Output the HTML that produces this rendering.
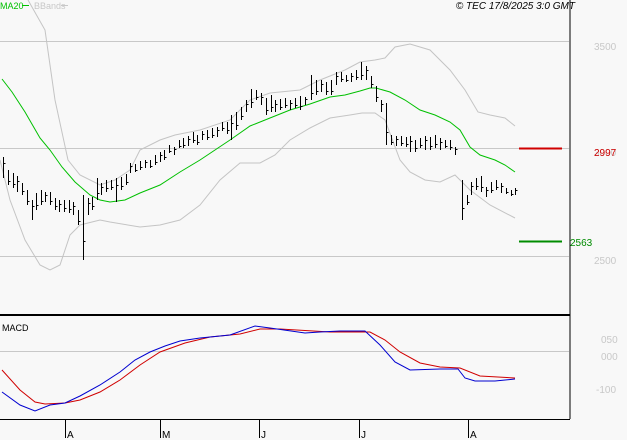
<!DOCTYPE html>
<html><head><meta charset="utf-8"><style>
html,body{margin:0;padding:0;background:#f8f8f8;}
svg{display:block;font-family:"Liberation Sans",sans-serif;}
</style></head><body>
<svg id="c" width="627" height="440" xmlns="http://www.w3.org/2000/svg">
<rect width="627" height="440" fill="#f8f8f8"/>
<g stroke="#c8c8c8" stroke-width="1">
<line x1="0" y1="41.5" x2="569" y2="41.5"/>
<line x1="0" y1="148.5" x2="569" y2="148.5"/>
<line x1="0" y1="256.5" x2="569" y2="256.5"/>
<line x1="0" y1="351.5" x2="569" y2="351.5"/>
</g>
<g fill="none" stroke="#c4c4c4" stroke-width="1">
<polyline points="28,0 45,30 55,100 68,160 80,175 100,185 115,180 130,170 140,150 160,140 175,135 200,130 230,120 250,100 270,93 300,90 320,80 345,70 360,62 375,60 385,58 395,47 410,44 430,50 450,70 465,90 478,112 490,115 505,118 515,126"/>
<polyline points="0,160 10,200 25,240 40,265 50,270 60,265 70,235 80,225 100,220 110,222 140,227 160,225 180,220 200,205 220,180 240,163 260,163 275,155 290,140 310,128 330,118 350,115 362,113 375,113 385,120 400,160 410,172 425,180 440,182 455,175 470,190 490,205 515,218"/>
</g>
<polyline fill="none" stroke="#00c000" stroke-width="1" points="2,79 12,92 25,112 40,138 50,150 62,167 75,182 90,195 100,200 110,202 125,200 140,193 160,185 180,172 200,160 230,140 250,126 270,118 290,110 310,104 330,97 345,95 360,91 370,88 376,88 390,92 405,100 420,110 435,115 450,122 460,130 470,147 480,155 495,160 505,165 515,172"/>
<g id="bars" stroke="#000" stroke-width="1" fill="none"></g>
<line x1="570" y1="0" x2="570" y2="419" stroke="#000" stroke-width="1"/>
<line x1="0" y1="315" x2="570" y2="315" stroke="#000" stroke-width="2"/>
<line x1="0" y1="419.5" x2="570" y2="419.5" stroke="#000" stroke-width="1"/>
<line x1="519" y1="148.5" x2="562" y2="148.5" stroke="#d00000" stroke-width="2"/>
<line x1="519" y1="241.5" x2="562" y2="241.5" stroke="#008c00" stroke-width="2"/>
<g font-size="10" fill="#c8c8c8">
<text x="594" y="50">3500</text>
<text x="594" y="156">3000</text>
<text x="594" y="264">2500</text>
<text x="601" y="343">050</text>
<text x="601" y="360">000</text>
<text x="596" y="393">-100</text>
</g>
<text x="594" y="156" font-size="10" fill="#d00000">2997</text>
<text x="570" y="246" font-size="10" fill="#008c00">2563</text>
<text x="0" y="9" font-size="9" fill="#00c000">MA20</text>
<line x1="22" y1="5.5" x2="29" y2="5.5" stroke="#00c000"/>
<text x="34" y="9" font-size="9" fill="#c8c8c8">BBands</text>
<line x1="61" y1="5.5" x2="68" y2="5.5" stroke="#c8c8c8"/>
<text x="575" y="9" font-size="10" font-style="italic" fill="#000" text-anchor="end">© TEC 17/8/2025 3:0 GMT</text>
<text x="2" y="331" font-size="9" fill="#000">MACD</text>
<polyline fill="none" stroke="#d00000" stroke-width="1" points="2,370 20,390 35,402 45,404 65,403 80,400 100,392 120,380 140,365 160,352 185,343 210,337 240,334 260,329 280,329 330,332 370,332 385,340 400,352 420,363 440,367 460,368 480,376 515,378"/>
<polyline fill="none" stroke="#0000d0" stroke-width="1" points="2,392 20,405 35,411 50,405 65,403 80,396 100,385 120,372 135,360 150,352 165,346 180,341 200,338 230,335 255,326 270,328 305,333 320,332 340,331 365,331 380,345 395,362 410,370 440,369 458,369 465,378 475,381 495,381 515,379"/>
<g stroke="#000" stroke-width="1">
<line x1="65.5" y1="419" x2="65.5" y2="438"/>
<line x1="160.5" y1="419" x2="160.5" y2="438"/>
<line x1="259.5" y1="419" x2="259.5" y2="438"/>
<line x1="359.5" y1="419" x2="359.5" y2="438"/>
<line x1="468.5" y1="419" x2="468.5" y2="438"/>
</g>
<g font-size="10" fill="#000">
<text x="67" y="438">A</text>
<text x="162" y="438">M</text>
<text x="261" y="438">J</text>
<text x="361" y="438">J</text>
<text x="470" y="438">A</text>
</g>
</svg>
<script>
var b=[[3,157,178],[8,170,185],[13,173,188],[17,176,192],[22,183,195],[27,190,205],[32,200,220],[36,193,210],[41,190,205],[45,192,202],[50,192,205],[55,198,210],[59,200,212],[64,200,212],[69,200,213],[73,202,215],[78,210,225],[83,195,260],[88,198,215],[92,197,210],[97,178,200],[101,183,195],[106,180,192],[111,180,190],[116,178,202],[121,177,190],[126,174,185],[130,163,173],[135,164,172],[140,161,170],[145,160,168],[150,160,168],[155,155,165],[160,152,162],[164,150,160],[169,145,153],[174,147,155],[179,140,148],[183,138,148],[188,136,146],[193,132,143],[197,135,145],[202,131,140],[207,130,140],[212,128,138],[217,127,137],[222,122,131],[227,122,134],[231,115,140],[236,112,130],[241,107,120],[246,100,112],[251,89,108],[256,90,100],[261,93,105],[266,98,115],[271,95,112],[275,100,112],[280,99,110],[285,98,108],[290,100,110],[295,98,108],[300,96,110],[305,97,105],[311,75,100],[316,80,95],[321,80,92],[326,82,95],[331,80,95],[336,72,85],[341,72,82],[346,75,82],[351,73,82],[356,70,80],[361,62,80],[366,66,80],[371,76,88],[376,86,102],[381,100,112],[386,103,145],[391,135,145],[396,136,146],[401,136,146],[406,137,147],[410,136,152],[415,140,152],[420,138,148],[425,136,150],[430,137,150],[435,135,148],[440,138,150],[445,140,148],[450,140,150],[455,147,155],[462,180,220],[467,195,205],[471,182,195],[476,178,190],[481,176,192],[486,187,197],[491,182,193],[496,180,190],[501,183,193],[506,188,194],[511,190,196],[515,188,195]];
var d="";for(var i=0;i<b.length;i++){var x=b[i][0]+.5,t=b[i][1],bt=b[i][2],c=Math.round(t+(bt-t)*(i%3==0?0.3:0.7))+.5;d+="M"+x+" "+t+"V"+bt+"M"+x+" "+c+"h2";}
var p=document.createElementNS("http://www.w3.org/2000/svg","path");p.setAttribute("d",d);document.getElementById("bars").appendChild(p);
</script>
</body></html>
